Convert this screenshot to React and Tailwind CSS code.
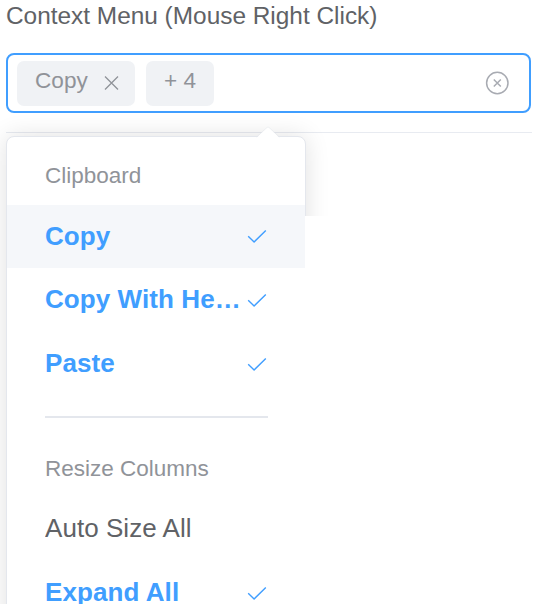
function Check({ className }) {
  return (
    <svg className={`h-[15px] w-[20px] shrink-0 ${className}`} viewBox="0 0 20 15" fill="none" stroke="#409eff" strokeWidth="1.4">
      <path d="M1.2 7.2 L7.1 12.9 L18.8 1.4" />
    </svg>
  );
}

function Option({ label, selected, active, className = "h-[64px]" }) {
  return (
    <li className={`flex items-center justify-between pl-[38px] pr-[38px] text-[26px] ${className} ${active ? "bg-[#f5f7fa]" : ""} ${selected ? "font-bold text-[#409eff]" : "tracking-[0.05px] text-[#606266]"}`}>
      <span className={`w-[200px] truncate leading-[40px] ${selected ? "tracking-[0.08px]" : ""}`}>{label}</span>
      {selected && <Check className={active ? "mt-0" : "mt-[2px]"} />}
    </li>
  );
}

function Group({ title, className, children }) {
  return (
    <>
      <li className={`flex items-center pl-[38px] text-[22.5px] text-[#909399] ${className}`}>{title}</li>
      {children}
    </>
  );
}

export default function App() {
  return (
    <div className="relative h-[604px] w-[534px] overflow-hidden bg-white font-['Liberation_Sans',Arial,sans-serif]">
      <label className="block h-[53px] pl-[6px] pt-[1px] text-[24.4px] leading-[30px] text-[#606266]">
        Context Menu (Mouse Right Click)
      </label>
      <div className="ml-[6px] flex h-[60px] w-[525px] items-center rounded-[8px] border-2 border-[#409eff] pl-[9px] pr-[20px] text-[22.6px] text-[#909399]">
        <span className="flex h-[45px] w-[118px] items-center rounded-[7px] bg-[#f0f2f5] pl-[18px]">
          <span className="w-[69px] pb-[5px]">Copy</span>
          <svg className="h-[16px] w-[16px]" viewBox="0 0 16 16" stroke="#909399" strokeWidth="1.3">
            <path d="M1 1.5 L14 14.5 M14 1.5 L1 14.5" />
          </svg>
        </span>
        <span className="ml-[11px] flex h-[45px] w-[68px] items-center rounded-[7px] bg-[#f0f2f5] pb-[5px] pl-[18px]">+ 4</span>
        <svg className="ml-auto h-[24px] w-[24px]" viewBox="0 0 24 24" fill="none" stroke="#a8abb2" strokeWidth="1.5">
          <circle cx="12.3" cy="12" r="10.7" />
          <path d="M8.8 8.5 L15.8 15.5 M15.8 8.5 L8.8 15.5" />
        </svg>
      </div>
      <hr className="ml-[6px] mt-[19px] w-[526px] border-[#e8ebf1]" />
      <div className="absolute left-[6px] top-[136px] h-[500px] w-[300px] rounded-[8px] border border-[#e4e7ed] bg-white shadow-[0_0_24px_rgba(0,0,0,0.12)]">
        <svg className="absolute left-[248px] top-[-11px] h-[13px] w-[26px]" viewBox="0 0 26 13">
          <path d="M1 12.5 L12 1.5 Q13 .6 14 1.5 L25 12.5 Z" fill="white" />
          <path d="M1.5 11 L12 1.5 Q13 .6 14 1.5 L24.5 11" fill="none" stroke="#e4e7ed" strokeWidth=".6" />
        </svg>
        <ul>
          <Group title="Clipboard" className="h-[68px] pt-[9px]">
            <Option label="Copy" selected active className="h-[63px] pb-[1px]" />
            <Option label="Copy With Headers" selected className="h-[63px] pb-[1px]" />
            <Option label="Paste" selected />
          </Group>
          <li className="ml-[38px] mr-[37px] mt-[21px] h-[2px] bg-[#e4e7ed]" />
          <Group title="Resize Columns" className="h-[78px] pt-[23px]">
            <Option label="Auto Size All" />
            <Option label="Expand All" selected />
          </Group>
        </ul>
      </div>
      <div className="absolute left-[305px] top-[216px] h-[388px] w-[229px] bg-white" />
    </div>
  );
}
